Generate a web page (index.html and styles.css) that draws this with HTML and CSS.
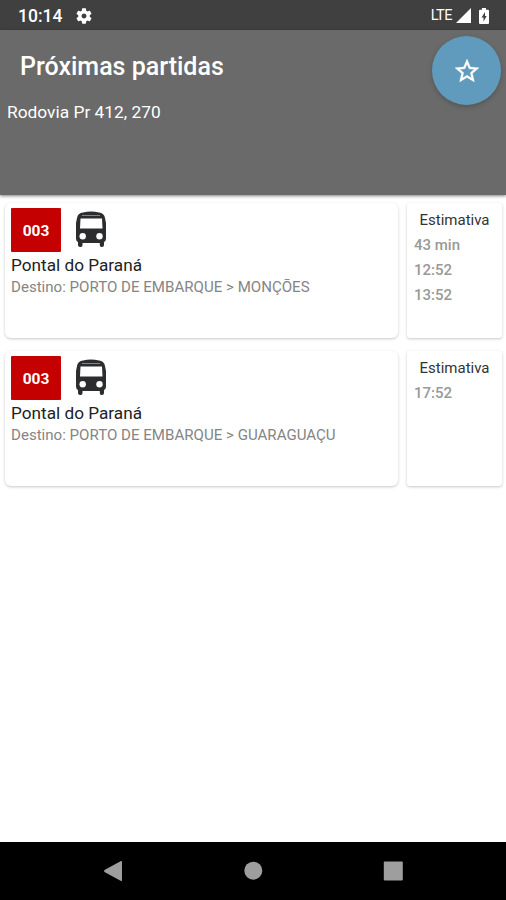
FILE: index.html
```
<!DOCTYPE html>
<html lang="pt">
<head>
<meta charset="utf-8">
<title>Próximas partidas</title>
<link rel="stylesheet" href="styles.css">
</head>
<body>
<svg class="defs" aria-hidden="true">
  <symbol id="bus" viewBox="0 0 30 36">
    <path fill="#2b2d2e" d="M7 1.6Q15-.8 23 1.6Q28.2 2.2 29 7L30 12V27.5Q30 30 28 31V34Q28 36 26 36H25.500Q23.800 36 23.800 34V32H6.500V34Q6.500 36 4.800 36H4Q2 36 2 34V31Q0 30 0 27.500V12L1 7Q1.800 2.200 7 1.600Z"/>
    <path fill="none" stroke="#858585" stroke-width="1" d="M6 4.500H24"/>
    <path fill="#fff" d="M4.500 7.500H26L26.500 17.500H4Z"/>
    <circle fill="#fff" cx="6.700" cy="25.300" r="3.200"/><circle fill="#fff" cx="23.500" cy="25.300" r="3.200"/>
  </symbol>
</svg>
<div class="statusbar">
  <span class="clock">10:14</span>
  <svg class="gear" viewBox="2 2 20 20"><path fill="#fff" d="M19.140 12.940c.04-.3.06-.61.06-.94 0-.32-.02-.64-.07-.94l2.030-1.580c.18-.14.23-.41.12-.61l-1.920-3.320c-.12-.22-.37-.29-.59-.22l-2.390.96c-.5-.38-1.030-.7-1.620-.94l-.36-2.540c-.04-.24-.24-.41-.48-.41h-3.840c-.24 0-.43.17-.47.41l-.36 2.540c-.59.24-1.130.57-1.620.94l-2.390-.96c-.22-.08-.47 0-.59.22L2.740 8.870c-.12.21-.08.47.12.61l2.030 1.580c-.05.3-.09.63-.09.94s.02.64.07.94l-2.030 1.580c-.18.14-.23.41-.12.61l1.920 3.320c.12.22.37.29.59.22l2.390-.96c.5.38 1.030.7 1.620.94l.36 2.540c.05.24.24.41.48.41h3.840c.24 0 .44-.17.47-.41l.36-2.540c.59-.24 1.130-.56 1.620-.94l2.390.96c.22.08.47 0 .59-.22l1.920-3.320c.12-.22.07-.47-.12-.61l-2.010-1.580zM12 15.100c-1.710 0-3.100-1.390-3.100-3.100s1.390-3.100 3.100-3.100 3.100 1.390 3.100 3.100-1.390 3.100-3.100 3.100z"/></svg>
  <span class="lte">LTE</span>
  <svg class="signal" viewBox="0 0 15 15"><path fill="#fff" d="M15 0V15H0Z"/></svg>
  <svg class="battery" viewBox="0 0 10 16"><path fill="#fff" d="M3 0H7V1.800H9Q10 1.800 10 3V15Q10 16 9 16H1Q0 16 0 15V3Q0 1.800 1 1.800H3Z"/><path fill="#404040" d="M6 4L2.500 9.500H4.500V13.500L7.700 8H6Z"/></svg>
</div>
<header class="header">
  <div class="heading">
    <h1>Próximas partidas</h1>
    <p>Rodovia Pr 412, 270</p>
  </div>
  <button class="fab" aria-label="Favorito"><svg viewBox="2 2 20 19"><path fill="#fff" stroke="#fff" stroke-width=".3" d="M22 9.240l-7.190-.62L12 2 9.190 8.630 2 9.240l5.460 4.730L5.820 21 12 17.270 18.180 21l-1.630-7.030L22 9.240zM12 15.400l-3.760 2.270 1-4.280-3.320-2.880 4.380-.38L12 6.100l1.710 4.040 4.380.38-3.320 2.880 1 4.280L12 15.400z"/></svg></button>
</header>
<main class="list">
  <section class="row">
    <article class="card trip">
      <div class="line"><span class="badge">003</span><svg class="bus"><use href="#bus"/></svg></div>
      <h2>Pontal do Paraná</h2>
      <p>Destino: PORTO DE EMBARQUE &gt; MONÇÕES</p>
    </article>
    <aside class="card times"><h3>Estimativa</h3><b>43 min</b><b>12:52</b><b>13:52</b></aside>
  </section>
  <section class="row">
    <article class="card trip">
      <div class="line"><span class="badge">003</span><svg class="bus"><use href="#bus"/></svg></div>
      <h2>Pontal do Paraná</h2>
      <p>Destino: PORTO DE EMBARQUE &gt; GUARAGUAÇU</p>
    </article>
    <aside class="card times"><h3>Estimativa</h3><b>17:52</b></aside>
  </section>
</main>
<nav class="navbar">
  <svg viewBox="0 0 20 22"><path fill="#9e9e9e" d="M18 1Q19 .5 19 2V20Q19 21.500 18 21L1.500 12Q.5 11 1.500 10Z"/></svg>
  <svg viewBox="0 0 20 22"><circle fill="#9e9e9e" cx="10.300" cy="10.700" r="9"/></svg>
  <svg viewBox="0 0 20 22"><rect fill="#9e9e9e" x=".8" y="1.500" width="19" height="19" rx="1"/></svg>
</nav>
</body>
</html>
```
FILE: styles.css
```
* { box-sizing: border-box; }
body {
  margin: 0;
  width: 506px;
  height: 900px;
  display: flex;
  flex-direction: column;
  overflow: hidden;
  background: #fff;
  font-family: Roboto, "Liberation Sans", sans-serif;
}
h1, h2, h3, p { margin: 0; font-weight: 400; white-space: nowrap; }
.defs { display: none; }
svg { display: block; flex: none; }
.statusbar {
  height: 30px;
  flex: none;
  display: flex;
  align-items: center;
  padding: 1px 17px 0 18px;
  background: #404040;
  color: #fff;
}
.clock { width: 58px; font-size: 17.500px; font-weight: 500; line-height: 30px; }
.gear { width: 16px; height: 16px; }
.lte { margin-left: auto; font-size: 14.500px; letter-spacing: -.5px; }
.signal { width: 15px; height: 15px; margin: 0 8px 0 4px; }
.battery { width: 10px; height: 16px; }
.header {
  height: 165px;
  flex: none;
  display: flex;
  justify-content: space-between;
  padding: 6px 5px 0 7px;
  background: #6a6a6a;
  color: #fff;
  box-shadow: 0 1px 3px rgba(0, 0, 0, .5);
}
.heading h1 { padding: 16px 0 0 13px; font-size: 25px; line-height: 30px; font-weight: 500; }
.heading p { padding-top: 18px; font-size: 17.350px; line-height: 24px; }
.fab {
  width: 69px;
  height: 69px;
  padding: 0;
  border: 0;
  border-radius: 50%;
  display: flex;
  align-items: center;
  justify-content: center;
  background: #609bbd;
  box-shadow: 0 2px 5px rgba(0, 0, 0, .2);
}
.fab svg { width: 24px; height: 23px; }
.list { flex: 1; display: flex; flex-direction: column; gap: 13px; padding: 8px 4px 0 5px; }
.row { display: flex; gap: 9px; height: 135px; }
.card { background: #fff; box-shadow: 0 1px 3px rgba(0, 0, 0, .22); }
.trip { width: 393px; padding: 5px 6px; border-radius: 6px; }
.line { display: flex; }
.badge {
  width: 50px;
  height: 44px;
  border-radius: 1px;
  background: #c40000;
  color: #fff;
  font-size: 15.500px;
  line-height: 46px;
  font-weight: 700;
  text-align: center;
}
.bus { width: 30px; height: 36px; margin: 3px 0 0 15px; }
.trip h2 { margin-top: 1px; color: #222; font-size: 17.200px; line-height: 24px; }
.trip p { color: #858585; font-size: 15.080px; line-height: 21px; }
.times { flex: 1; padding: 5px 7px 0; border-radius: 3px; display: flex; flex-direction: column; }
.times h3 { padding-left: 5.500px; color: #333; font-size: 15px; line-height: 25px; }
.times b { color: #999; font-size: 15px; line-height: 25px; font-weight: 500; }
.navbar {
  height: 58px;
  flex: none;
  display: flex;
  justify-content: center;
  gap: 120px;
  padding-top: 18px;
  background: #000;
}
.navbar svg { width: 20px; height: 22px; }
```
